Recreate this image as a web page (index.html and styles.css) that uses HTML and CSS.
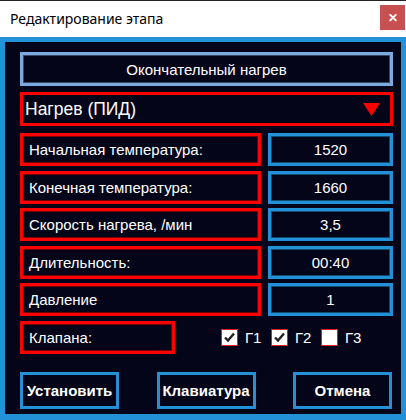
FILE: index.html
```html
<!DOCTYPE html>
<html lang="ru">
<head>
<meta charset="utf-8">
<title>Редактирование этапа</title>
<link rel="stylesheet" href="styles.css">
</head>
<body>
<div class="window">
  <div class="titlebar">
    <span class="title">Редактирование этапа</span>
    <span class="close">✕</span>
  </div>
  <div class="frame">
    <div class="content">
      <div class="stage-name">Окончательный нагрев</div>
      <div class="combo">
        <span class="combo-text">Нагрев (ПИД)</span>
        <svg class="arrow" width="17" height="13" viewBox="0 0 17 13"><polygon points="0,0 17,0 8.5,13" fill="#ff0000"/></svg>
      </div>
      <div class="rows">
        <div class="label">Начальная температура:</div>
        <div class="value">1520</div>
        <div class="label">Конечная температура:</div>
        <div class="value">1660</div>
        <div class="label">Скорость нагрева, /мин</div>
        <div class="value">3,5</div>
        <div class="label">Длительность:</div>
        <div class="value">00:40</div>
        <div class="label">Давление</div>
        <div class="value">1</div>
        <div class="valve-row">
          <div class="label short">Клапана:</div>
          <div class="checks">
            <label class="check"><span class="box"><svg width="15" height="15" viewBox="0 0 15 15"><path d="M3 7.5 L6 10.5 L12 3.5" fill="none" stroke="#222" stroke-width="2.4"/></svg></span>Г1</label>
            <label class="check"><span class="box"><svg width="15" height="15" viewBox="0 0 15 15"><path d="M3 7.5 L6 10.5 L12 3.5" fill="none" stroke="#222" stroke-width="2.4"/></svg></span>Г2</label>
            <label class="check"><span class="box plain"></span>Г3</label>
          </div>
        </div>
      </div>
      <div class="buttons">
        <div class="btn">Установить</div>
        <div class="btn">Клавиатура</div>
        <div class="btn">Отмена</div>
      </div>
    </div>
  </div>
</div>
</body>
</html>
```
FILE: styles.css
```css
html, body {
  margin: 0;
  padding: 0;
  background: #ffffff;
}
.window {
  width: 406px;
  height: 420px;
  display: flex;
  flex-direction: column;
  font-family: "Liberation Sans", Arial, sans-serif;
  color: #ffffff;
}
.titlebar {
  flex-shrink: 0;
  height: 36px;
  border-top: 1px solid #222222;
  background: #ffffff;
  display: flex;
  align-items: center;
  justify-content: space-between;
  padding: 0 1px 0 10px;
}
.title {
  font-family: "Noto Sans", "Open Sans", sans-serif;
  font-size: 14px;
  color: #000000;
  margin-top: -2px;
}
.close {
  width: 25px;
  height: 25px;
  margin-top: -3px;
  background: #c75050;
  color: #ffffff;
  font-size: 12px;
  font-weight: bold;
  display: flex;
  align-items: center;
  justify-content: center;
}
.frame {
  flex: 1;
  min-height: 0;
  overflow: hidden;
  border: 5px solid #2391d7;
  border-bottom-width: 6px;
  background: #05051a;
}
.content {
  padding: 10px 8px 0 15px;
  display: flex;
  flex-direction: column;
}
.stage-name {
  height: 28px;
  border: 3px solid #7aaade;
  box-shadow: inset 0 0 0 1px #3a4a66;
  display: flex;
  align-items: center;
  justify-content: center;
  font-size: 15px;
}
.combo {
  margin-top: 6px;
  height: 28px;
  border: 3px solid #ff0000;
  display: flex;
  align-items: center;
  justify-content: space-between;
  padding: 0 10px 0 2px;
}
.combo-text {
  font-size: 17.5px;
}
.arrow {
  display: block;
  margin-top: 1px;
}
.rows {
  margin-top: 7px;
  display: grid;
  grid-template-columns: 241px 125px;
  grid-auto-rows: 33px;
  column-gap: 7px;
  row-gap: 4.6px;
}
.label {
  border: 3px solid #ff0000;
  box-shadow: inset 0 0 0 1px #7a0000;
  display: flex;
  align-items: center;
  padding-left: 6px;
  font-size: 15px;
}
.value {
  border: 3px solid #2391d7;
  box-shadow: inset 0 0 0 1px #124a70;
  display: flex;
  align-items: center;
  justify-content: center;
  font-size: 15px;
}
.valve-row {
  grid-column: 1 / 3;
  display: flex;
  align-items: stretch;
}
.label.short {
  width: 143px;
}
.checks {
  margin-left: 46px;
  display: flex;
  align-items: center;
}
.check {
  display: flex;
  align-items: center;
  font-size: 15px;
  width: 50px;
}
.box {
  width: 15px;
  height: 15px;
  border: 1px solid #e02020;
  background: #ffffff;
  margin-right: 7px;
  display: flex;
}
.box svg {
  display: block;
}
.buttons {
  margin-top: 18px;
  display: flex;
  justify-content: space-between;
  padding-right: 1px;
}
.btn {
  width: 93px;
  height: 31px;
  border: 3px solid #2391d7;
  display: flex;
  align-items: center;
  justify-content: center;
  font-size: 15px;
  font-weight: bold;
}
```
